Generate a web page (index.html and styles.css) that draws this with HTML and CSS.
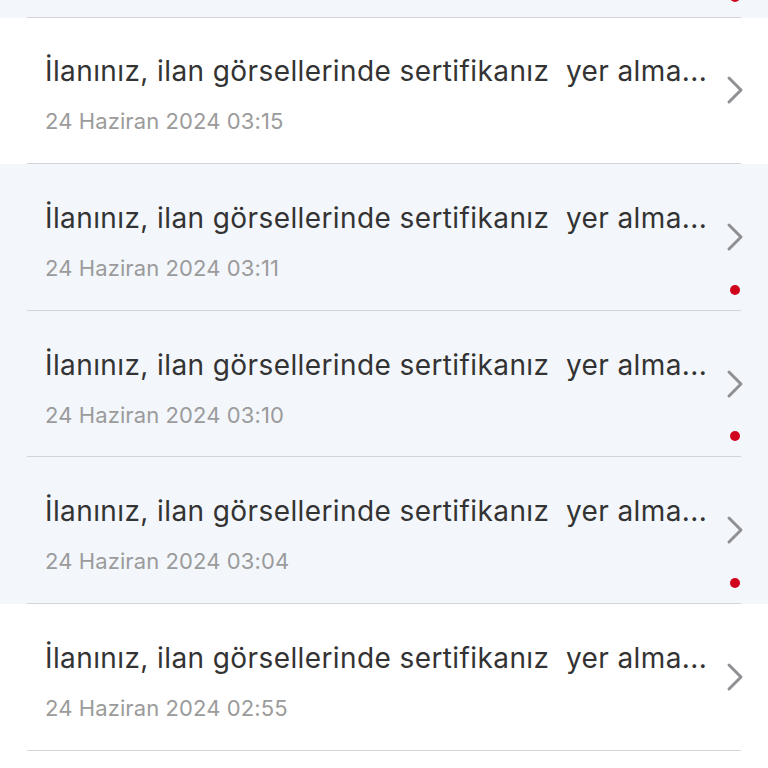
FILE: index.html
```html
<!DOCTYPE html>
<html lang="tr">
<head>
    <meta charset="UTF-8">
    <meta name="viewport" content="width=device-width, initial-scale=1.0">
    <title>Bildirimler</title>
    <link rel="stylesheet" href="styles.css">
</head>
<body>

<ul class="notifications">
    <!-- only the bottom edge of this one is on screen -->
    <li class="item unread">
        <div class="item-inner">
            <span class="dot"></span>
        </div>
    </li>
    <li class="item">
        <div class="item-inner">
            <div class="text">
                <div class="title">İlanınız, ilan görsellerinde sertifikanız  yer alma...</div>
                <div class="date">24 Haziran 2024 03:15</div>
            </div>
            <svg class="chevron" viewBox="0 0 18 30"><path d="M3 3 L15 15 L3 27"/></svg>
        </div>
    </li>
    <li class="item unread">
        <div class="item-inner">
            <div class="text">
                <div class="title">İlanınız, ilan görsellerinde sertifikanız  yer alma...</div>
                <div class="date">24 Haziran 2024 03:11</div>
            </div>
            <svg class="chevron" viewBox="0 0 18 30"><path d="M3 3 L15 15 L3 27"/></svg>
            <span class="dot"></span>
        </div>
    </li>
    <li class="item unread">
        <div class="item-inner">
            <div class="text">
                <div class="title">İlanınız, ilan görsellerinde sertifikanız  yer alma...</div>
                <div class="date">24 Haziran 2024 03:10</div>
            </div>
            <svg class="chevron" viewBox="0 0 18 30"><path d="M3 3 L15 15 L3 27"/></svg>
            <span class="dot"></span>
        </div>
    </li>
    <li class="item unread">
        <div class="item-inner">
            <div class="text">
                <div class="title">İlanınız, ilan görsellerinde sertifikanız  yer alma...</div>
                <div class="date">24 Haziran 2024 03:04</div>
            </div>
            <svg class="chevron" viewBox="0 0 18 30"><path d="M3 3 L15 15 L3 27"/></svg>
            <span class="dot"></span>
        </div>
    </li>
    <li class="item">
        <div class="item-inner">
            <div class="text">
                <div class="title">İlanınız, ilan görsellerinde sertifikanız  yer alma...</div>
                <div class="date">24 Haziran 2024 02:55</div>
            </div>
            <svg class="chevron" viewBox="0 0 18 30"><path d="M3 3 L15 15 L3 27"/></svg>
        </div>
    </li>
</ul>

</body>
</html>
```

FILE: styles.css
```css
body {
    margin: 0;
    font-family: Inter, "Open Sans", sans-serif;
    background-color: #fff;
    overflow: hidden;
}

.notifications {
    list-style-type: none;
    margin: -129px 0 0 0;
    padding: 0;
}

.item {
    background-color: #fff;
}

.item.unread {
    background-color: #f3f7fc;
}

.item-inner {
    position: relative;
    display: flex;
    align-items: center;
    height: 146.6px;
    box-sizing: border-box;
    margin: 0 27px;
    padding-left: 18px;
    border-bottom: 1px solid #d4d4d8;
}

.text {
    flex: 1;
    min-width: 0;
    padding-top: 9px;
}

.title {
    font-size: 28px;
    line-height: 34px;
    color: #333333;
    white-space: pre;
    letter-spacing: 0.4px;
}

.date {
    margin-top: 19px;
    font-size: 22px;
    line-height: 28px;
    color: #9b9b9b;
    letter-spacing: 0.1px;
}

.chevron {
    width: 18px;
    height: 30px;
    margin-right: -3px;
    fill: none;
    stroke: #909094;
    stroke-width: 3;
    stroke-linecap: round;
    stroke-linejoin: round;
}

.dot {
    position: absolute;
    right: 1px;
    bottom: 15px;
    width: 10px;
    height: 10px;
    border-radius: 50%;
    background-color: #d0021b;
}
```
